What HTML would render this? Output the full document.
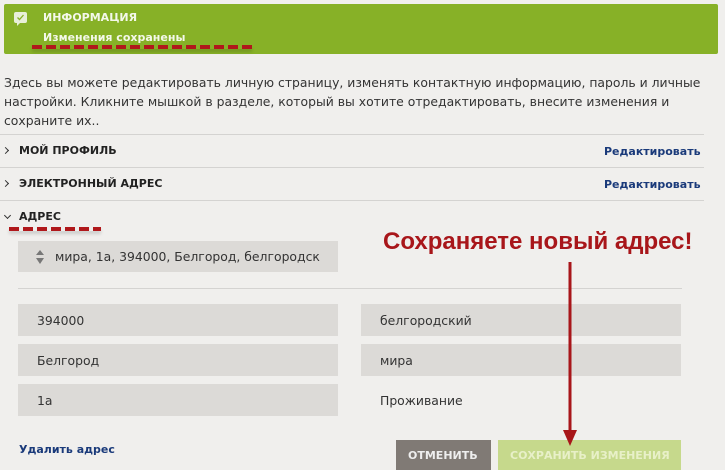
<!DOCTYPE html>
<html><head><meta charset="utf-8"><style>
body{margin:0;width:725px;height:465px;background:#f0efed;position:relative;overflow:hidden;font-family:"DejaVu Sans","Liberation Sans",sans-serif;color:#333;}
.a{position:absolute;white-space:nowrap;}
.hr{position:absolute;height:1px;background:#d4d3d1;}
.box{position:absolute;background:#dcdad7;}
.t{font-size:12.4px;}
.b{font-weight:bold;font-size:11px;color:#222;}
.lnk{font-weight:bold;font-size:11px;color:#1a3a7a;}
.dash{position:absolute;height:4px;background:repeating-linear-gradient(90deg,#b0181b 0 10px,transparent 10px 14px);box-shadow:0 3px 3px rgba(0,0,0,.15);}
.chev{position:absolute;width:4px;height:4px;border-right:1.5px solid #333;border-bottom:1.5px solid #333;}
</style></head><body>
<div class="a" style="left:4px;top:4px;width:714px;height:50px;background:#87b127;border-radius:2px"></div>
<svg class="a" style="left:14px;top:12px" width="14" height="15"><rect x="0" y="0" width="13" height="11" rx="2" fill="#e8efd8"/><path d="M3 11 L3 14 L6 11Z" fill="#e8efd8"/><path d="M3.5 5.5 L5.5 7.5 L9.5 3" stroke="#87b127" stroke-width="1.3" fill="none"/></svg>
<div class="a" style="left:43px;top:11px;font-size:11px;font-weight:bold;color:#f4f8ea">ИНФОРМАЦИЯ</div>
<div class="a" style="left:43px;top:31px;font-size:11px;font-weight:bold;color:#f4f8ea">Изменения сохранены</div>
<div class="dash" style="left:32px;top:45px;width:220px"></div>
<div class="a t" style="left:4px;top:73px;line-height:19px;white-space:normal;width:700px;color:#333">Здесь вы можете редактировать личную страницу, изменять контактную информацию, пароль и личные настройки. Кликните мышкой в разделе, который вы хотите отредактировать, внесите изменения и сохраните их..</div>
<div class="hr" style="left:0;top:134px;width:704px"></div>
<div class="chev" style="left:3px;top:148px;transform:rotate(-45deg)"></div>
<div class="a b" style="left:19px;top:144px">МОЙ ПРОФИЛЬ</div>
<div class="a lnk" style="left:604px;top:145px">Редактировать</div>
<div class="hr" style="left:0;top:167px;width:704px"></div>
<div class="chev" style="left:3px;top:181px;transform:rotate(-45deg)"></div>
<div class="a b" style="left:19px;top:177px">ЭЛЕКТРОННЫЙ АДРЕС</div>
<div class="a lnk" style="left:604px;top:178px">Редактировать</div>
<div class="hr" style="left:0;top:200px;width:704px"></div>
<div class="chev" style="left:5px;top:213px;transform:rotate(45deg)"></div>
<div class="a b" style="left:19px;top:210px">АДРЕС</div>
<div class="dash" style="left:9px;top:227px;width:92px"></div>
<div class="box" style="left:18px;top:241px;width:320px;height:31px"></div>
<svg class="a" style="left:36px;top:250px" width="8" height="14"><path d="M4 0 L8 5 L0 5Z M4 14 L8 8 L0 8Z" fill="#777"/></svg>
<div class="a t" style="left:55px;top:249px;width:266px;overflow:hidden">мира, 1а, 394000, Белгород, белгородский</div>
<div class="hr" style="left:18px;top:288px;width:664px"></div>
<div class="box" style="left:18px;top:304px;width:320px;height:32px"></div>
<div class="a t" style="left:37px;top:313px">394000</div>
<div class="box" style="left:361px;top:304px;width:320px;height:32px"></div>
<div class="a t" style="left:380px;top:313px">белгородский</div>
<div class="box" style="left:18px;top:344px;width:320px;height:32px"></div>
<div class="a t" style="left:37px;top:353px">Белгород</div>
<div class="box" style="left:361px;top:344px;width:320px;height:32px"></div>
<div class="a t" style="left:380px;top:353px">мира</div>
<div class="box" style="left:18px;top:384px;width:320px;height:32px"></div>
<div class="a t" style="left:37px;top:393px">1а</div>
<div class="a t" style="left:380px;top:393px">Проживание</div>
<div class="a lnk" style="left:19px;top:443px">Удалить адрес</div>
<div class="a" style="left:396px;top:440px;width:95px;height:30px;background:#807a75"></div>
<div class="a" style="left:408px;top:449px;font-size:11px;font-weight:bold;color:#eee">ОТМЕНИТЬ</div>
<div class="a" style="left:498px;top:440px;width:183px;height:30px;background:#c6d98c"></div>
<div class="a" style="left:510px;top:449px;font-size:11px;font-weight:bold;color:#e8f0c8">СОХРАНИТЬ ИЗМЕНЕНИЯ</div>
<div class="a" style="left:383px;top:228px;font-family:'Liberation Sans',sans-serif;font-size:24px;font-weight:bold;color:#a8161a">Сохраняете новый адрес!</div>
<svg class="a" style="left:558px;top:262px" width="24" height="190"><line x1="12" y1="0" x2="12" y2="172" stroke="#a8161a" stroke-width="3"/><path d="M5 168 L19 168 L12 184Z" fill="#a8161a"/></svg>
</body></html>
